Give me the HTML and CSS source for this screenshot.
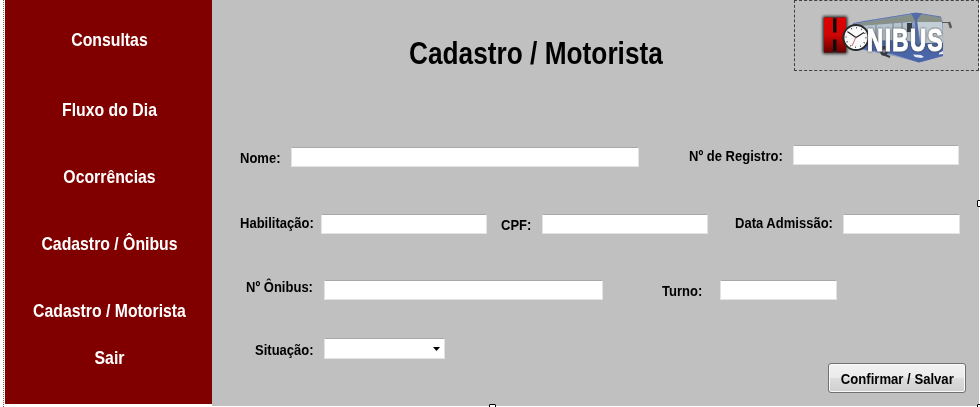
FILE: index.html
```html
<!DOCTYPE html>
<html lang="pt-BR">
<head>
<meta charset="utf-8">
<title>Cadastro / Motorista</title>
<link rel="stylesheet" href="styles.css">
</head>
<body>
<div class="window">
  <nav class="sidebar">
    <a>Consultas</a>
    <a>Fluxo do Dia</a>
    <a>Ocorrências</a>
    <a>Cadastro / Ônibus</a>
    <a>Cadastro / Motorista</a>
    <a>Sair</a>
  </nav>
  <main class="panel">
    <header class="header">
      <h1>Cadastro / Motorista</h1>
      <div class="logo">
        <svg width="185" height="71" viewBox="0 0 185 71">
          <defs>
            <linearGradient id="red" x1="0" y1="0" x2="0" y2="1"><stop offset="0" stop-color="#e00000"/><stop offset=".5" stop-color="#cf0505"/><stop offset="1" stop-color="#650000"/></linearGradient>
            <filter id="glow" x="-40%" y="-40%" width="180%" height="180%"><feGaussianBlur stdDeviation="1.5"/></filter>
          </defs>
          <path d="M58 24 69 21 122 13 147 17 149 22 149 56 125 62.500 100 56 64 49Z" fill="#8b9ac0"/>
          <path d="M60 24 122 14 147 17 148 22 118 22 64 26Z" fill="#879187"/>
          <path d="M59 23.500 122 13 147 17" fill="none" stroke="#6077ad"/>
          <path d="M67 26 117 22 119 46 68 46Z" fill="#b7c4cd"/>
          <path d="M123 22 148 22 149 45 127 44Z" fill="#c4ced6"/>
          <path d="M66 41 108 40 127 43 149 43 149 56 125 62.500 98 54 68 49Z" fill="#4b66a8"/>
          <path d="M117 13 128 13 123 20 126 44 122 44 121 21Z" fill="#536ca9"/>
          <path d="M82 25V44M99 23V43M108 22V43" stroke="#687c96"/>
          <path d="M113 23h5v9h-5Z" fill="#333b44"/>
          <ellipse cx="90" cy="51" rx="4" ry="5" fill="#343942"/><circle cx="90" cy="51" r="1.800" fill="#89909a"/><path d="m91 55 5 2" stroke="#383c44" stroke-width="2"/>
          <path d="m119 54.500 8 .5 3 2-3 1-6-1Zm26-1.500 4-2v3l-4 .5Z" fill="#e4e9f1"/>
          <path d="M148 22.500h7" fill="none" stroke="#565b60"/>
          <path d="m155 22 2 6" stroke="#565b60" stroke-width="2.500"/>
          <path d="M29 16.500h24v37H29Z" fill="#111" filter="url(#glow)"/>
          <path d="M30 17.500h9v15h3.500v-15H52v35h-9.500v-13H39v13h-9Z" fill="url(#red)"/>
          <circle cx="62" cy="37.500" r="12.600" fill="#fafafa" stroke="#25282b" stroke-width="2"/>
          <circle cx="62" cy="37.500" r="9.800" fill="none" stroke="#333" stroke-width="1.600" stroke-dasharray=".8 4.330"/>
          <path d="m54 32 8 5.500 8-5" fill="none" stroke="#222" stroke-width="1.200"/><path d="m62 37 -4 9" stroke="#c8474b" stroke-width=".8"/>
          <text class="logo-text" x="73" y="50.500" textLength="77" lengthAdjust="spacingAndGlyphs">NIBUS</text>
        </svg>
      </div>
    </header>
    <form class="form">
      <div class="row row-name">
        <div class="field nome"><label>Nome:</label><input></div>
        <div class="field registro"><label>Nº de Registro:</label><input></div>
      </div>
      <div class="row row-license">
        <div class="field habilitacao"><label>Habilitação:</label><input></div>
        <div class="field cpf"><label>CPF:</label><input></div>
        <div class="field admissao"><label>Data Admissão:</label><input></div>
      </div>
      <div class="row row-bus">
        <div class="field onibus"><label>Nº Ônibus:</label><input></div>
        <div class="field turno"><label>Turno:</label><input></div>
      </div>
      <div class="row row-status">
        <div class="field situacao"><label>Situação:</label><div class="select"><svg width="7" height="4" viewBox="0 0 7 4"><path d="M0 0h7L3.500 4Z"/></svg></div></div>
        <button type="button"><span>Confirmar / Salvar</span></button>
      </div>
    </form>
  </main>
  <i class="handle handle-right"></i>
  <i class="handle handle-bottom"></i>
  <i class="handle handle-corner"></i>
</div>
</body>
</html>
```
FILE: styles.css
```css
* { box-sizing: border-box; }

body {
  margin: 0;
  background: #fff;
  font-family: "Liberation Sans", Arial, sans-serif;
  font-weight: bold;
  color: #000;
}

.window {
  position: relative;
  display: flex;
  width: 980px;
  height: 407px;
  overflow: hidden;
  padding-left: 3px;
}

.window::before {
  content: "";
  width: 1px;
  margin-right: 1px;
  background: repeating-linear-gradient(#8a6060 0 1px, #fff 1px 2px);
}

.sidebar {
  display: flex;
  flex-direction: column;
  width: 207px;
  height: 404px;
  padding: 6px 0 0 2px;
  background: #800000;
  color: #fff;
  font-size: 19px;
  text-align: center;
}

.sidebar a {
  height: 67px;
  line-height: 67px;
  transform: scaleX(.832);
}

.sidebar a:first-child { height: 70px; }
.sidebar a:nth-child(5) { height: 47px; }

.panel {
  width: 767px;
  height: 406px;
  background: #c0c0c0;
}

.header {
  display: flex;
  justify-content: space-between;
  height: 71px;
  padding-left: 197px;
}

h1 {
  margin: 35px 0 0;
  font-size: 31px;
  line-height: 38px;
  white-space: nowrap;
  transform: scaleX(.847);
  transform-origin: left;
}

.logo {
  width: 185px;
  height: 71px;
  border: 1px dashed #404040;
}

.logo svg { display: block; margin: -1px; }

.logo-text {
  font-size: 31px;
  font-weight: bold;
  letter-spacing: 2px;
  fill: #fff;
  stroke: #fff;
  stroke-width: 1.2px;
  filter: drop-shadow(0 0 1px #333);
}

.row { display: flex; align-items: flex-start; }
.row-name { height: 69px; margin-top: 74px; }
.row-license { height: 66px; }
.row-bus { height: 58px; }

.field { display: flex; align-items: flex-start; }

label {
  font-size: 15.4px;
  line-height: 20px;
  white-space: nowrap;
  transform: scaleX(.846);
  transform-origin: left;
}

input, .select {
  height: 20px;
  margin: 0;
  padding: 0;
  border: 1px solid #e3e3e3;
  border-top-color: #a7a8ac;
  border-radius: 1px;
  background: #fff;
}

.nome { margin: 2px 0 0 28px; }
.nome label { width: 51px; margin-top: 1px; }
.nome input { width: 348px; }
.registro { margin-left: 50px; }
.registro label { width: 104px; margin-top: 1px; }
.registro input { width: 166px; }

.habilitacao { margin-left: 28px; }
.habilitacao label { width: 81px; margin-top: -1px; }
.habilitacao input { width: 166px; }
.cpf { margin-left: 14px; }
.cpf label { width: 41px; margin-top: 1px; }
.cpf input { width: 166px; }
.admissao { margin-left: 27px; }
.admissao label { width: 108px; margin-top: -1px; }
.admissao input { width: 117px; }

.onibus { margin-left: 34px; }
.onibus label { width: 78px; margin-top: -3px; }
.onibus input { width: 279px; }
.turno { margin-left: 59px; }
.turno label { width: 58px; margin-top: 1px; }
.turno input { width: 117px; }

.situacao { margin-left: 43px; }
.situacao label { width: 69px; margin-top: 2px; }

.select {
  display: flex;
  align-items: center;
  justify-content: flex-end;
  width: 121px;
  height: 21px;
  padding-right: 4px;
}

button {
  display: flex;
  align-items: center;
  justify-content: center;
  width: 138px;
  height: 30px;
  margin: 25px 0 0 383px;
  padding: 1px 0 0;
  border: 1px solid #707070;
  border-radius: 3px;
  background: linear-gradient(#f2f2f2, #ebebeb 48%, #dddddd 50%, #cfcfcf);
  box-shadow: inset 0 0 0 1px #fafafa;
  color: #000;
  font: bold 15.4px "Liberation Sans", Arial, sans-serif;
  white-space: nowrap;
}

button span { transform: scaleX(.852); }

.handle {
  position: absolute;
  width: 7px;
  height: 7px;
  border: 1px solid #000;
  border-radius: 1px;
  background: #fff;
}

.handle-right { left: 977px; top: 200px; }
.handle-bottom { left: 489px; top: 404px; }
.handle-corner { left: 977px; top: 404px; }
```
